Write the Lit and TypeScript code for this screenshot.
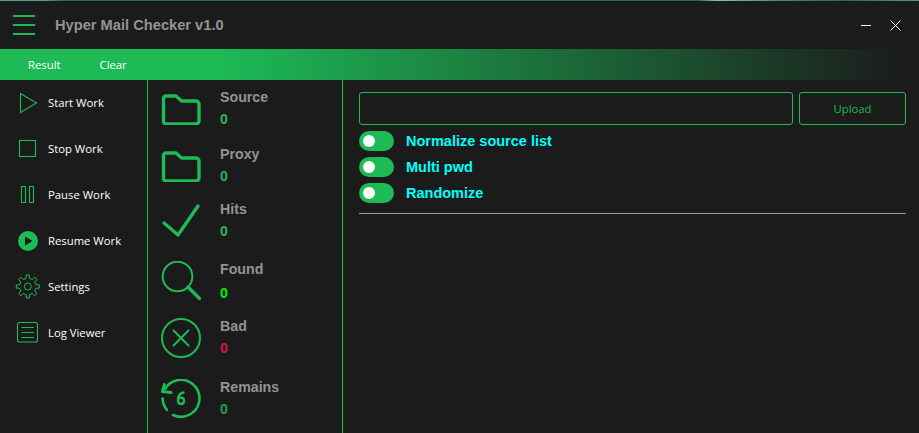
import { LitElement, html, css, svg } from "lit";
import { customElement } from "lit/decorators.js";

const G = "#1dba56";

const folder = svg`<path d="M2.500 5.500a2.500 2.500 0 0 1 2.500-2.500h10l5.500 5h14.500a3 3 0 0 1 3 3v17a3 3 0 0 1-3 3H5a2.500 2.500 0 0 1-2.500-2.500z" fill="none" stroke="${G}" stroke-width="3.400" stroke-linejoin="round"/>`;

const stats = [
  { label: "Source", h: 57, gap: 22, up: 2, w: 40, ih: 32, cls: "", icon: folder, vb: "0 0 40 32" },
  { label: "Proxy", h: 57, gap: 22, up: 2, w: 40, ih: 32, cls: "", icon: folder, vb: "0 0 40 32" },
  { label: "Hits", h: 54, gap: 22, up: 2, w: 40, ih: 36, cls: "", vb: "0 0 40 36",
    icon: svg`<path d="M3 20l14 12L37 3" fill="none" stroke="${G}" stroke-width="3.400" stroke-linecap="round" stroke-linejoin="round"/>` },
  { label: "Found", h: 65, gap: 24, up: 0, w: 40, ih: 40, cls: "lime", vb: "0 0 40 40",
    icon: svg`<circle cx="16.500" cy="15.500" r="14.800" fill="none" stroke="${G}" stroke-width="2"/><path d="M27 26l11.500 11.500" stroke="${G}" stroke-width="3.400" stroke-linecap="round"/>` },
  { label: "Bad", h: 50, gap: 22, up: 2, w: 40, ih: 40, cls: "red", vb: "0 0 40 40",
    icon: svg`<circle cx="20" cy="20" r="19" fill="none" stroke="${G}" stroke-width="2"/><path d="M12.500 12.500l15 15M27.500 12.500l-15 15" stroke="${G}" stroke-width="2" stroke-linecap="round"/>` },
  { label: "Remains", h: 71, gap: 22, up: 2, w: 40, ih: 40, cls: "dim", vb: "0 0 40 40",
    icon: svg`<path d="M4 10A18.500 18.500 0 1 1 12 36" fill="none" stroke="${G}" stroke-width="2.600" stroke-linecap="round"/><path d="M1.600 19.500A18.500 18.500 0 0 0 6 31" fill="none" stroke="${G}" stroke-width="2.600" stroke-linecap="round"/><path d="M3.300 5.500L1.300 12.500l8.700 1" fill="none" stroke="${G}" stroke-width="2.800" stroke-linecap="round" stroke-linejoin="round"/><path d="M22.500 13.500c-3 0-5.500 3-5.500 7.500 0 2.500 1.200 4 3 4s3-1.400 3-3.200-1.200-3.200-3-3.200-3 1.200-3 2.500" fill="none" stroke="${G}" stroke-width="2.400" stroke-linecap="round"/>` },
];

const gear = (() => {
  const pts: string[] = [];
  const cx = 12.8, cy = 14.5, n = 8;
  for (let i = 0; i < n; i++) {
    const a = (i / n) * Math.PI * 2 - Math.PI / 2;
    const s = Math.PI / n;
    const add = (r: number, t: number) =>
      pts.push(`${(cx + r * Math.cos(t)).toFixed(2)} ${(cy + r * Math.sin(t)).toFixed(2)}`);
    add(11.6, a - s * 0.36);
    add(11.6, a + s * 0.36);
    add(8.3, a + s * 0.55);
    add(8.3, a + s * 1.45);
  }
  return "M" + pts.join("L") + "Z";
})();

const menu = [
  { label: "Start Work", icon: svg`<path d="M5.500 5.500L21.500 15 5.500 24.500z" fill="none" stroke="${G}" stroke-width="1.100"/>` },
  { label: "Stop Work", icon: svg`<rect x="4.500" y="6.500" width="16" height="16" fill="none" stroke="${G}" stroke-width="1.100"/>` },
  { label: "Pause Work", icon: svg`<path d="M6.500 6.500h4v16h-4zM14.500 6.500h4v16h-4z" fill="none" stroke="${G}" stroke-width="1.100"/>` },
  { label: "Resume Work", icon: svg`<circle cx="13" cy="15" r="10" fill="${G}"/><path d="M10 10.500l7.500 4.500-7.500 4.500z" fill="#1b1b1b"/>` },
  { label: "Settings", icon: svg`<path d="${gear}" fill="none" stroke="${G}" stroke-width="1"/><circle cx="12.800" cy="14.500" r="3.500" fill="none" stroke="${G}" stroke-width="1"/>` },
  { label: "Log Viewer", icon: svg`<rect x="2.500" y="4.500" width="20" height="19.500" rx="2" fill="none" stroke="${G}" stroke-width="1.100"/><path d="M6.500 9.500h12.500M6.500 14.500h12.500M6.500 19.500h12.500" stroke="${G}" stroke-width="1.100"/>` },
];

@customElement("app-root")
export class AppRoot extends LitElement {
  static styles = css`
    :host {
      --g: #1dba56;
      display: block;
      width: 919px;
      height: 433px;
      overflow: hidden;
      background: #1b1b1b;
      color: #fff;
      font-family: "Liberation Sans", Arial, sans-serif;
    }
    .app { display: flex; flex-direction: column; height: 433px; box-sizing: border-box; }
    .edge {
      height: 1px; flex: none;
      background: linear-gradient(90deg, #4d9c88 0, #4d9c88 5%, #1f6f5c 7%, #1f6f5c 76%, #7fc4b4 78%, #3a8c78 85%, #1f6f5c 92%, #4d9c88 100%);
    }
    .title { height: 48px; display: flex; align-items: center; flex: none; }
    .burger { width: 22px; margin-left: 13px; height: 20px; display: flex; flex-direction: column; justify-content: space-between; }
    .burger i { display: block; height: 2px; background: var(--g); }
    .title h1 { margin: 0 0 0 20px; font-size: 14.67px; font-weight: 700; color: #939393; flex: 1; }
    .win { margin-right: 18px; display: flex; gap: 18px; align-items: center; }
    .tabs {
      height: 31px; flex: none; display: flex; align-items: center; padding-left: 28px; gap: 39px;
      font: 11.3px "Open Sans", sans-serif; color: #fff;
      background: linear-gradient(90deg, var(--g) 0, var(--g) 220px, #1b1b1b 905px);
    }
    .body { flex: 1; display: flex; min-height: 0; }
    .side { width: 147px; flex: none; border-right: 1px solid var(--g); }
    .row { height: 46px; display: flex; align-items: center; font: 11.3px "Open Sans", sans-serif; color: #fff; padding-left: 15px; }
    .row span { margin-bottom: 2px; }
    .mi { flex: none; width: 30px; height: 30px; margin-right: 3px; }
    .stats { width: 194px; flex: none; border-right: 1px solid var(--g); }
    .stat { display: flex; align-items: center; padding-left: 13px; box-sizing: border-box; }
    .stat svg { flex: none; margin-right: 19px; }
    .txt { display: flex; flex-direction: column; font-size: 14.2px; font-weight: 700; line-height: 16px; color: #939393; }
    .val { color: var(--g); }
    .val.lime { color: #00f000; }
    .val.red { color: #dc143c; }
    .val.dim { color: #1ba050; }
    .main { flex: 1; padding: 12px 13px 0 16px; min-width: 0; }
    .upl { display: flex; gap: 6px; }
    .input { flex: 1; height: 33px; border: 1px solid var(--g); border-radius: 3px; box-sizing: border-box; }
    .btn { width: 107px; height: 33px; border: 1px solid var(--g); border-radius: 3px; box-sizing: border-box; display: flex; align-items: center; justify-content: center; font: 11.3px "Open Sans", sans-serif; color: var(--g); }
    .opts { margin-top: 6px; display: flex; flex-direction: column; gap: 6px; }
    .opt { display: flex; align-items: center; height: 20px; gap: 12px; color: #0ff; font-size: 14.5px; font-weight: 700; }
    .sw { width: 35px; height: 20px; border-radius: 10px; background: var(--g); position: relative; flex: none; }
    .sw::after { content: ""; position: absolute; left: 4px; top: 4px; width: 12px; height: 12px; border-radius: 50%; background: #fff; }
    .hr { margin-top: 10px; height: 1px; background: #9a9a9a; }
  `;

  render() {
    return html`<div class="app">
      <div class="edge"></div>
      <div class="title">
        <div class="burger"><i></i><i></i><i></i></div>
        <h1>Hyper Mail Checker v1.0</h1>
        <div class="win">
          <svg width="11" height="11" viewBox="0 0 11 11"><path d="M0 5.500h10" stroke="#fff" stroke-width="1"/></svg>
          <svg width="11" height="11" viewBox="0 0 11 11"><path d="M.5.500l10 10M10.500.500l-10 10" stroke="#fff" stroke-width="1"/></svg>
        </div>
      </div>
      <div class="tabs"><span>Result</span><span>Clear</span></div>
      <div class="body">
        <div class="side">
          ${menu.map((m) => html`<div class="row"><svg class="mi" viewBox="0 0 30 30">${m.icon}</svg><span>${m.label}</span></div>`)}
        </div>
        <div class="stats">
          ${stats.map(
            (s) => html`<div class="stat" style="height:${s.h}px">
              <svg width=${s.w} height=${s.ih} viewBox=${s.vb}>${s.icon}</svg>
              <div class="txt" style="margin-bottom:${s.up}px"><span>${s.label}</span><span class="val ${s.cls}" style="margin-top:${s.gap - 16}px">0</span></div>
            </div>`
          )}
        </div>
        <div class="main">
          <div class="upl"><div class="input"></div><div class="btn">Upload</div></div>
          <div class="opts">
            ${["Normalize source list", "Multi pwd", "Randomize"].map(
              (o) => html`<div class="opt"><span class="sw"></span><span>${o}</span></div>`
            )}
          </div>
          <div class="hr"></div>
        </div>
      </div>
    </div>`;
  }
}
